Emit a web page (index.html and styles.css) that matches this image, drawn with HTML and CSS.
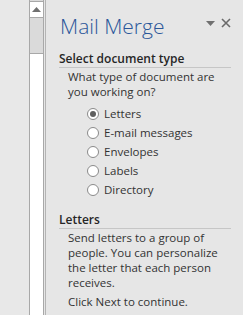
FILE: index.html
```html
<html>
<head>
<title>Mail Merge</title>
<link rel="stylesheet" href="styles.css">
</head>
<body>
<div class="frame">
  <div class="gutter"></div>
  <div class="scrollbar">
    <div class="sb-up">
      <svg width="9" height="5" viewBox="0 0 9 5"><path d="M0 5 L4.5 0 L9 5 Z" fill="#707070"/></svg>
    </div>
    <div class="sb-track"></div>
    <div class="sb-thumb"></div>
  </div>
  <div class="pane">
    <div class="pane-head">
      <h1>Mail Merge</h1>
      <div class="pane-tools">
        <svg width="9" height="5" viewBox="0 0 9 5"><path d="M0 0 L9 0 L4.5 5 Z" fill="#707070"/></svg>
        <svg width="10" height="10" viewBox="0 0 10 10"><path d="M1 1 L9 9 M9 1 L1 9" stroke="#6a6a6a" stroke-width="1.6"/></svg>
      </div>
    </div>

    <h2>Select document type</h2>
    <p class="text">What type of document are you working on?</p>
    <ul class="choices">
      <li><span class="radio checked"></span>Letters</li>
      <li><span class="radio"></span>E-mail messages</li>
      <li><span class="radio"></span>Envelopes</li>
      <li><span class="radio"></span>Labels</li>
      <li><span class="radio"></span>Directory</li>
    </ul>

    <h2>Letters</h2>
    <p class="text">Send letters to a group of people. You can personalize the letter that each person receives.</p>
    <p class="text next">Click Next to continue.</p>
  </div>
</div>
</body>
</html>
```

FILE: styles.css
```css
body {
  margin: 0;
  background: #e6e6e6;
  font-family: "Open Sans", "DejaVu Sans", sans-serif;
  color: #333;
  overflow: hidden;
}
.frame {
  display: flex;
  height: 315px;
}
.gutter {
  width: 29px;
  background: #e8e8e8;
}
.scrollbar {
  width: 13px;
  display: flex;
  flex-direction: column;
  border-left: 1px solid #a8a8a8;
  border-right: 1px solid #a8a8a8;
  margin-right: 1px;
  background: #dadada;
}
.sb-up {
  height: 15px;
  margin-top: 1px;
  background: #fff;
  border-top: 1px solid #a8a8a8;
  border-bottom: 1px solid #a8a8a8;
  display: flex;
  align-items: center;
  justify-content: center;
}
.sb-track {
  height: 35px;
}
.sb-thumb {
  flex: 1;
  background: #fff;
  border-top: 1px solid #a8a8a8;
}
.pane {
  flex: 1;
  border-left: 1px solid #b4b4b4;
  padding: 0 12px 0 13px;
}
.pane-head {
  display: flex;
  justify-content: space-between;
  align-items: flex-start;
  height: 51px;
}
h1 {
  margin: 12px 0 0 1px;
  font-weight: 300;
  font-size: 21px;
  color: #2b579a;
}
.pane-tools {
  display: flex;
  gap: 6px;
  align-items: center;
  margin-top: 18px;
}
h2 {
  margin: 0;
  font-size: 12px;
  line-height: 15px;
  font-weight: 600;
  color: #262626;
  border-bottom: 1px solid #c6c6c6;
  padding-bottom: 1px;
}
.text {
  margin: 1px 0 0 9px;
  font-size: 11.5px;
  line-height: 15px;
}
.text.next {
  margin-top: 4px;
}
.choices {
  list-style: none;
  margin: 5px 0 13px 28px;
  padding: 0;
  font-size: 11.5px;
}
.choices li {
  display: flex;
  align-items: center;
  height: 19px;
}
.radio {
  width: 10px;
  height: 10px;
  border: 1px solid #8a8a8a;
  border-radius: 50%;
  background: #fff;
  margin-right: 5px;
  display: flex;
  align-items: center;
  justify-content: center;
}
.radio.checked::after {
  content: "";
  width: 6px;
  height: 6px;
  border-radius: 50%;
  background: #5f5f5f;
}
```
